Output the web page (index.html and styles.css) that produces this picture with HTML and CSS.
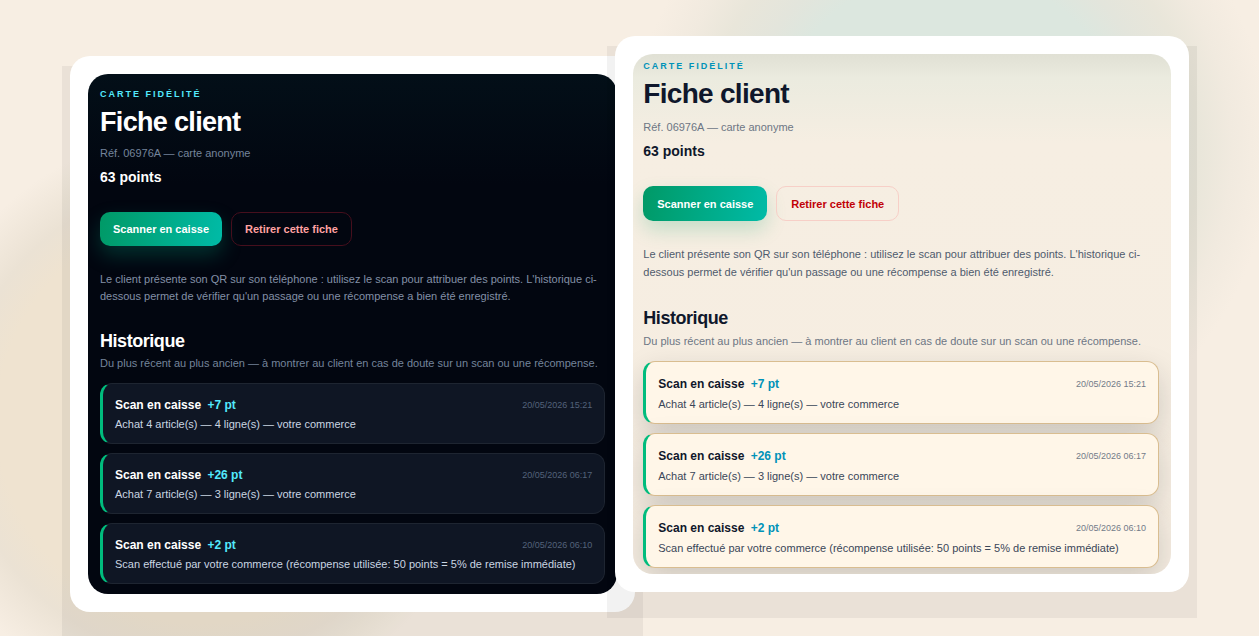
FILE: index.html
```html
<!DOCTYPE html>
<html lang="fr">
<head>
    <meta charset="UTF-8">
    <meta name="viewport" content="width=device-width, initial-scale=1.0">
    <title>Fiche client</title>
    <link rel="stylesheet" href="styles.css">
</head>
<body>
    <main class="scene">
        <section class="frame frame-dark">
            <div class="panel">
                <p class="eyebrow">CARTE FIDÉLITÉ</p>
                <h1>Fiche client</h1>
                <p class="ref">Réf. 06976A — carte anonyme</p>
                <p class="points">63 points</p>
                <div class="actions">
                    <button type="button" class="btn btn-scan">Scanner en caisse</button>
                    <button type="button" class="btn btn-remove">Retirer cette fiche</button>
                </div>
                <p class="intro">Le client présente son QR sur son téléphone : utilisez le scan pour attribuer des points. L'historique ci-dessous permet de vérifier qu'un passage ou une récompense a bien été enregistré.</p>
                <h2>Historique</h2>
                <p class="hint">Du plus récent au plus ancien — à montrer au client en cas de doute sur un scan ou une récompense.</p>
                <ul class="history">
                    <li class="entry">
                        <div class="entry-head">
                            <h3>Scan en caisse <span class="gain">+7 pt</span></h3>
                            <time>20/05/2026 15:21</time>
                        </div>
                        <p>Achat 4 article(s) — 4 ligne(s) — votre commerce</p>
                    </li>
                    <li class="entry">
                        <div class="entry-head">
                            <h3>Scan en caisse <span class="gain">+26 pt</span></h3>
                            <time>20/05/2026 06:17</time>
                        </div>
                        <p>Achat 7 article(s) — 3 ligne(s) — votre commerce</p>
                    </li>
                    <li class="entry">
                        <div class="entry-head">
                            <h3>Scan en caisse <span class="gain">+2 pt</span></h3>
                            <time>20/05/2026 06:10</time>
                        </div>
                        <p>Scan effectué par votre commerce (récompense utilisée: 50 points = 5% de remise immédiate)</p>
                    </li>
                </ul>
            </div>
        </section>

        <section class="frame frame-light">
            <div class="panel">
                <p class="eyebrow">CARTE FIDÉLITÉ</p>
                <h1>Fiche client</h1>
                <p class="ref">Réf. 06976A — carte anonyme</p>
                <p class="points">63 points</p>
                <div class="actions">
                    <button type="button" class="btn btn-scan">Scanner en caisse</button>
                    <button type="button" class="btn btn-remove">Retirer cette fiche</button>
                </div>
                <p class="intro">Le client présente son QR sur son téléphone : utilisez le scan pour attribuer des points. L'historique ci-dessous permet de vérifier qu'un passage ou une récompense a bien été enregistré.</p>
                <h2>Historique</h2>
                <p class="hint">Du plus récent au plus ancien — à montrer au client en cas de doute sur un scan ou une récompense.</p>
                <ul class="history">
                    <li class="entry">
                        <div class="entry-head">
                            <h3>Scan en caisse <span class="gain">+7 pt</span></h3>
                            <time>20/05/2026 15:21</time>
                        </div>
                        <p>Achat 4 article(s) — 4 ligne(s) — votre commerce</p>
                    </li>
                    <li class="entry">
                        <div class="entry-head">
                            <h3>Scan en caisse <span class="gain">+26 pt</span></h3>
                            <time>20/05/2026 06:17</time>
                        </div>
                        <p>Achat 7 article(s) — 3 ligne(s) — votre commerce</p>
                    </li>
                    <li class="entry">
                        <div class="entry-head">
                            <h3>Scan en caisse <span class="gain">+2 pt</span></h3>
                            <time>20/05/2026 06:10</time>
                        </div>
                        <p>Scan effectué par votre commerce (récompense utilisée: 50 points = 5% de remise immédiate)</p>
                    </li>
                </ul>
            </div>
        </section>
    </main>
</body>
</html>
```

FILE: styles.css
```css
* {
    box-sizing: border-box;
}
body {
    margin: 0;
    font-family: "Liberation Sans", Arial, sans-serif;
    font-size: 11px;
    background-color: #f7eee3;
}
h1, h2, h3, p, ul {
    margin: 0;
    padding: 0;
}

/* background with two soft glows */
.scene {
    display: flex;
    align-items: flex-start;
    min-height: 100vh;
    padding: 36px 70px 24px;
    overflow: hidden;
    background:
        radial-gradient(circle 320px at 950px 150px, #dce7df 0%, #dce7df 56%, #e3e5dc 66%, #e9e6da 78%, #f1eadf 88%, rgba(247, 238, 227, 0) 100%),
        radial-gradient(circle 290px at 200px 420px, #efe3d0 0%, #efe3d0 70%, #ebe2d4 82%, rgba(247, 238, 227, 0) 100%),
        #f7eee3;
}

/* white frames with a hard, square shadow */
.frame {
    position: relative;
    isolation: isolate;
    min-width: 0;
}
.frame::before,
.frame::after {
    content: "";
    position: absolute;
    z-index: -1;
}
.frame::before {
    inset: 10px -8px -26px;
    background: rgba(0, 0, 0, 0.05);
}
.frame::after {
    inset: 0;
    background: #fff;
    border-radius: 20px;
}
.frame-dark {
    flex: 565 1 0;
    margin-top: 20px;
    padding: 18px;
}
.frame-light {
    flex: 574 1 0;
    margin-left: -20px;
    padding: 18px;
}
.panel {
    border-radius: 20px;
    overflow: hidden;
}

/* themes */
.frame-dark {
    --title: #fff;
    --accent: #53eafd;
    --muted: #74849b;
    --soft: #8290a7;
    --text: #cad5e2;
    --date: #53627a;
    --danger: #ffa2a2;
    --danger-border: #460f1d;
    --card: #0f1624;
    --card-border: #1e2531;
    --card-shadow: none;
    --scan-shadow: rgba(0, 153, 120, 0.3);
    --line: 17px;
    --btn-height: 34px;
    --btn-pad: 13px;
    --ref-gap: 8px;
    --intro-gap: 25px;
    --title-gap: 24px;
    --card-top: 13px;
}
.frame-light {
    --title: #0f172b;
    --accent: #0092b8;
    --muted: #6d7684;
    --soft: #4f5b6d;
    --text: #3a4658;
    --date: #737b88;
    --danger: #c10007;
    --danger-border: #f7cfc7;
    --card: #fff6e8;
    --card-border: #d9bd90;
    --card-shadow: 0 12px 30px rgba(30, 33, 38, 0.18);
    --scan-shadow: rgba(0, 153, 102, 0.2);
    --line: 18px;
    --btn-height: 35px;
    --btn-pad: 14px;
    --ref-gap: 9px;
    --intro-gap: 24px;
    --title-gap: 25px;
    --card-top: 14px;
}
.frame-dark .panel {
    padding: 14px 12px 10px;
    background: linear-gradient(#030f18, #020610 110px, #020610);
}
.frame-light .panel {
    padding: 6px 12px 6px 10px;
    background: linear-gradient(#e0e0d4, #ebebdf 24px, #f6eee2 90px, #f6ede1);
}

/* card header */
.eyebrow {
    font-size: 9px;
    line-height: 12px;
    font-weight: bold;
    letter-spacing: 2px;
    color: var(--accent);
}
h1 {
    margin-top: 7px;
    font-size: 27px;
    line-height: 30px;
    letter-spacing: -0.025em;
    color: var(--title);
}
.frame-light h1 {
    font-size: 28px;
}
.ref {
    margin-top: var(--ref-gap);
    line-height: var(--line);
    color: var(--muted);
}
.points {
    margin-top: 5px;
    font-size: 14px;
    line-height: 20px;
    font-weight: bold;
    color: var(--title);
}
.actions {
    display: flex;
    flex-wrap: wrap;
    gap: 9px;
    margin-top: 25px;
}
.btn {
    height: var(--btn-height);
    padding: 0 var(--btn-pad);
    border: 0;
    border-radius: 10px;
    font: bold 11px "Liberation Sans", Arial, sans-serif;
    cursor: pointer;
}
.btn-scan {
    color: #fff;
    background: linear-gradient(100deg, #009966, #00bba7);
    box-shadow: 0 9px 20px var(--scan-shadow);
}
.btn-remove {
    color: var(--danger);
    background: transparent;
    border: 1px solid var(--danger-border);
}
.intro {
    margin-top: var(--intro-gap);
    line-height: var(--line);
    color: var(--soft);
}

/* history */
h2 {
    margin-top: var(--title-gap);
    font-size: 18px;
    line-height: 24px;
    letter-spacing: -0.025em;
    color: var(--title);
}
.hint {
    margin-top: 2px;
    line-height: var(--line);
    color: var(--muted);
}
.history {
    display: flex;
    flex-direction: column;
    gap: 9px;
    margin-top: 11px;
    list-style: none;
}
.entry {
    padding: var(--card-top) 12px 10px;
    border: 1px solid var(--card-border);
    border-left: 3px solid #00bc7d;
    border-radius: 12px;
    background: var(--card);
    box-shadow: var(--card-shadow);
    color: var(--text);
    line-height: var(--line);
}
.entry-head {
    display: flex;
    justify-content: space-between;
    align-items: center;
    gap: 12px;
    margin-bottom: 2px;
}
.entry h3 {
    font-size: 12px;
    line-height: 17px;
    color: var(--title);
}
.gain {
    margin-left: 3px;
    color: var(--accent);
}
.entry time {
    font-size: 9px;
    line-height: 17px;
    color: var(--date);
}
```
